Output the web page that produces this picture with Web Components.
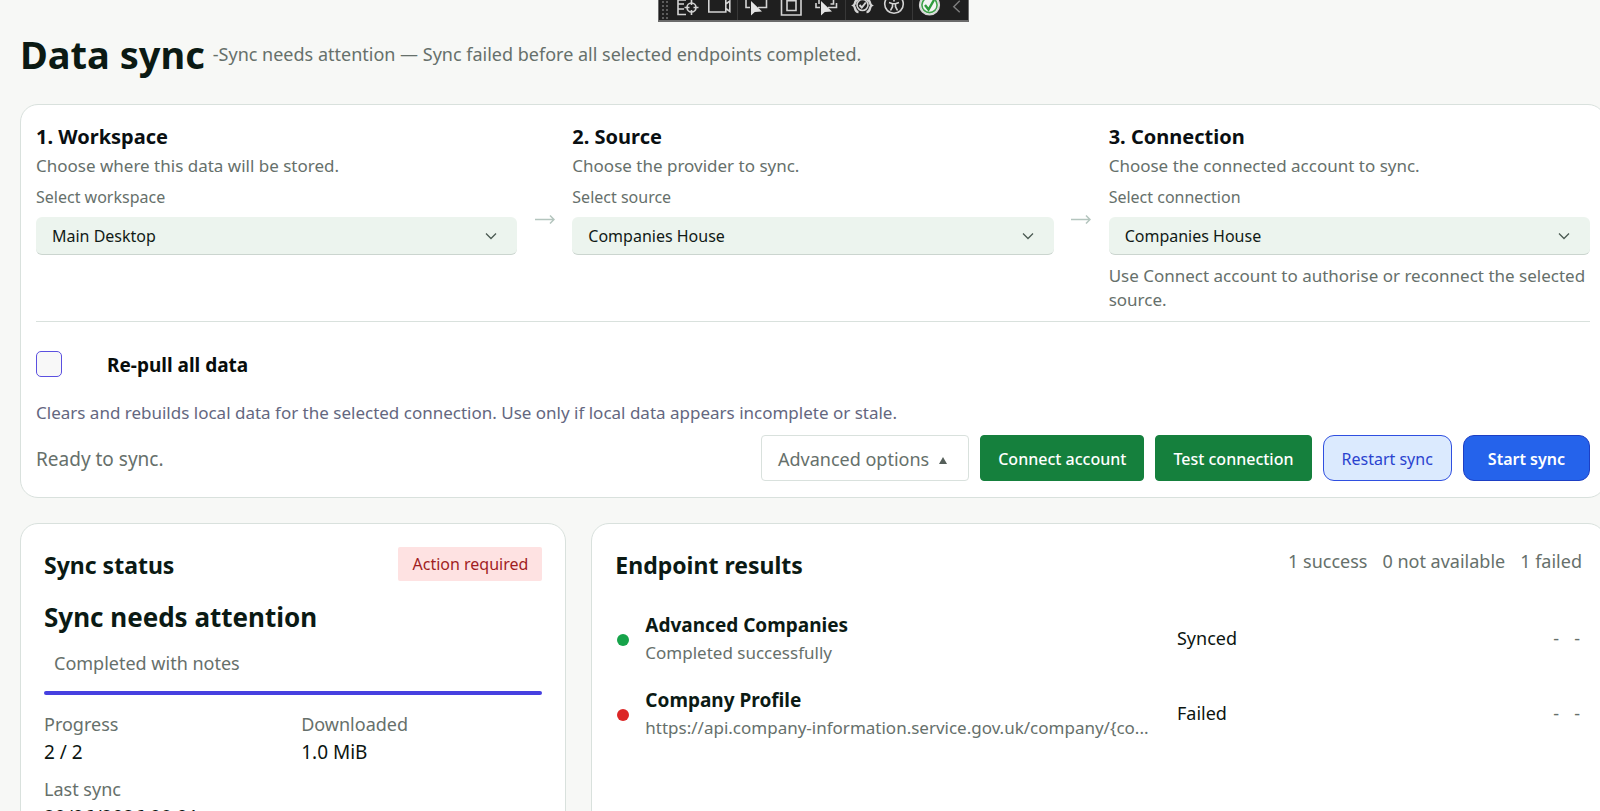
<!DOCTYPE html>
<html lang="en">
<head>
<meta charset="utf-8">
<meta name="viewport" content="width=device-width, initial-scale=1">
<title>Data sync</title>
<style>
  body {
    margin: 0;
    min-height: 100vh;
    overflow: hidden;
    background: #f7f8f6;
    color: #0b1511;
    font-family: "Noto Sans", "Open Sans", sans-serif;
    font-size: 18px;
    line-height: 24px;
    --ink: #0b1a14;
    --muted: #66706b;
    --line: #d9e1dd;
    --green: #15803d;
    --blue: #2563eb;
  }
</style>
</head>
<body>
<sync-page></sync-page>
<debug-toolbar></debug-toolbar>

<script>
// Floating tool strip that hangs from the top edge of the window
class DebugToolbar extends HTMLElement {
  constructor() {
    super();
    this.attachShadow({ mode: 'open' });
    this.shadowRoot.innerHTML = `
      <style>
        :host {
          position: absolute;
          top: 0;
          left: 658px;
          display: flex;
          height: 20px;
          background: #1f1f1f;
          border: 1px solid #6b6b6b;
          border-top: 0;
          border-bottom-width: 2px;
          overflow: hidden;
        }
        button {
          display: flex;
          justify-content: center;
          width: 32px;
          padding: 0;
          border: 0;
          background: none;
        }
        button.wide { width: 35px; }
        button.slim { width: 22px; }
        i { width: 1px; margin: 0 1px; background: #383838; }
        .grip {
          width: 9px;
          margin: 0 2px;
          background: radial-gradient(circle, #5c5c5c 1px, transparent 1px) 0 0 / 4px 4px;
        }
        svg { width: 24px; height: 20px; fill: none; stroke: #d4d4d4; stroke-width: 1.6; }
        .solid { fill: #e4e4e4; stroke: none; }
      </style>
      <span class="grip"></span>
      <button aria-label="Go to live visual tree"><svg viewBox="0 0 24 20"><path d="M2 0v14.500h8M2 4h6M2 9h6M2 0h8"/><circle cx="15.500" cy="7.500" r="4.500"/><path d="M15.500 0v5M15.500 10v5M8.500 7.500h5M17.500 7.500h5"/></svg></button>
      <button aria-label="Record"><svg viewBox="0 0 24 20"><path d="M.8 0v12h17V0M17.800 4l4-3v10.500l-4-3"/></svg></button>
      <i></i>
      <button class="wide" aria-label="Select element"><svg viewBox="0 0 24 20"><path d="M1 0v7.500h4M13 7.500h8.500V0"/><path class="solid" d="M6 1v14.500l3.800-3.600 7.200-.4z"/></svg></button>
      <button class="wide" aria-label="Display layout adorners"><svg viewBox="0 0 24 20"><path d="M1.500 0v15h19.500V0M7 0v10.500h9V0zM7 .7h9"/></svg></button>
      <button class="wide" aria-label="Track focused element"><svg viewBox="0 0 24 20"><path d="M1 3v4.500h4M4 0v4M13 7.500h8.500V3M18.500 0v4h-3"/><path class="solid" d="M6 1v14.500l3.800-3.600 7.200-.4z"/></svg></button>
      <i></i>
      <button aria-label="Binding failures"><svg viewBox="0 0 24 20"><path stroke-width="2.400" d="M7 0C3 0 5 4 2.500 5.500 5 7 3 12 7.500 12M16 0c4 0 2 4 4.500 5.500C18 7 20 12 15.500 12"/><circle cx="11.500" cy="5" r="5.500"/><path stroke-width="2" d="M8.500 5l2.300 2.500 4-5"/></svg></button>
      <button aria-label="Scan for accessibility"><svg viewBox="0 0 24 20"><circle cx="11" cy="4" r="9.300"/><path d="M6 2.500l3.500 1.200h3L16 2.500M9.500 3.700v3L7.500 10.500M12.500 3.700v3l2 3.800M11 0v1.500"/></svg></button>
      <i></i>
      <button aria-label="Hot reload"><svg viewBox="0 0 24 20"><circle cx="11.500" cy="5" r="9.800" fill="#f4f4f4"/><circle cx="11.500" cy="5" r="7.600" stroke="#3fa14a"/><path stroke="#2e9a3c" stroke-width="2.400" d="M7 5l3.500 4.500L16 0"/></svg></button>
      <button class="slim" aria-label="Collapse"><svg viewBox="0 0 24 20"><path stroke="#7c7c7c" d="M15 0L8.500 6.500l6.500 6"/></svg></button>
    `;
  }
}

class SurfaceCard extends HTMLElement {
  constructor() {
    super();
    this.attachShadow({ mode: 'open' });
    this.shadowRoot.innerHTML = `
      <style>
        :host {
          display: block;
          box-sizing: border-box;
          min-width: 0;
          padding: 23px;
          background: #fff;
          border: 1px solid var(--line);
          border-radius: 18px;
        }
        :host([compact]) { padding: 18px 15px 16px; }
      </style>
      <slot></slot>
    `;
  }
}

// One numbered step: heading, description and drop-down; the slot holds an optional hint
class SetupStep extends HTMLElement {
  constructor() {
    super();
    this.attachShadow({ mode: 'open' });
  }

  connectedCallback() {
    const heading = this.getAttribute('heading');
    const description = this.getAttribute('description');
    const label = this.getAttribute('label');
    const value = this.getAttribute('value');
    this.shadowRoot.innerHTML = `
      <style>
        :host { display: block; min-width: 0; font-size: 17px; color: var(--muted); }
        h2 { margin: 0 0 3px; font-size: 20px; line-height: 28px; font-weight: 700; color: #0a0f12; }
        p { margin: 0 0 8px; }
        label { display: block; margin-bottom: 9px; font-size: 16px; line-height: 22px; }
        .field { display: grid; align-items: center; margin-bottom: 9px; }
        select, svg { grid-area: 1 / 1; }
        select {
          appearance: none;
          width: 100%;
          height: 38px;
          padding: 1px 40px 0 16px;
          border: 0;
          border-bottom: 1px solid #cbd5cf;
          border-radius: 6px;
          background: #ecf4ee;
          color: #111a16;
          font: 16px/22px "Noto Sans", "Open Sans", sans-serif;
        }
        svg { justify-self: end; width: 12px; height: 8px; margin-right: 20px; fill: none; stroke: #4b5a53; stroke-width: 1.300; pointer-events: none; }
      </style>
      <h2>${heading}</h2>
      <p>${description}</p>
      <label for="choice">${label}</label>
      <div class="field">
        <select id="choice"><option>${value}</option></select>
        <svg viewBox="0 0 12 8"><path d="M1 1.500l5 5 5-5"/></svg>
      </div>
      <slot></slot>
    `;
  }
}

class StepArrow extends HTMLElement {
  constructor() {
    super();
    this.attachShadow({ mode: 'open' });
    this.shadowRoot.innerHTML = `
      <style>
        :host { display: flex; align-items: center; justify-content: center; }
        svg { width: 20px; height: 12px; fill: none; stroke: #b4c5be; stroke-width: 1.500; }
      </style>
      <svg viewBox="0 0 20 12"><path d="M0 7.500h19M15 3.500l4 4-4 4"/></svg>
    `;
  }
}

class ActionButton extends HTMLElement {
  constructor() {
    super();
    this.attachShadow({ mode: 'open' });
    this.shadowRoot.innerHTML = `
      <style>
        :host { display: block; }
        button {
          box-sizing: border-box;
          height: 46px;
          padding: 2px 17px 0;
          border: 1px solid var(--green);
          border-radius: 4px;
          background: var(--green);
          color: #fff;
          font: 500 16px/22px "Noto Sans", "Open Sans", sans-serif;
          white-space: nowrap;
        }
        :host([kind="outline"]) button {
          padding: 2px 21px 0 16px;
          background: #fff;
          border-color: var(--line);
          color: var(--muted);
          font-size: 18px;
          font-weight: 400;
        }
        :host([kind="soft"]) button {
          padding: 2px 18px 0;
          background: #dbeafe;
          border-color: #2f4fe0;
          border-radius: 11px;
          color: #2a43cf;
          font-weight: 400;
        }
        :host([kind="primary"]) button {
          padding: 2px 24px 0;
          background: var(--blue);
          border-color: #1d3fc4;
          border-radius: 11px;
          font-weight: 600;
        }
      </style>
      <button type="button"><slot></slot></button>
    `;
  }
}

class SetupPanel extends HTMLElement {
  constructor() {
    super();
    this.attachShadow({ mode: 'open' });
    this.shadowRoot.innerHTML = `
      <style>
        :host { display: block; }
        .steps { display: grid; grid-template-columns: 1fr 55px 1fr 55px 1fr; padding-bottom: 9px; border-bottom: 1px solid var(--line); }
        .repull { display: flex; align-items: center; gap: 45px; height: 26px; margin: 29px 0 24px; }
        .repull input {
          appearance: none;
          width: 26px;
          height: 26px;
          margin: 0;
          border: 1px solid #5b50e0;
          border-radius: 5px;
          background: #f8f8f8;
        }
        .repull input:checked { background: #4f46e5; }
        .repull label { padding-top: 2px; font-size: 19px; font-weight: 700; color: #080d0b; }
        .note { margin: 0 0 10px; font-size: 17px; color: #64677f; }
        .footer { display: flex; align-items: center; gap: 11px; }
        .state { flex: 1; padding-top: 2px; font-size: 19px; color: var(--muted); }
        .caret {
          display: inline-block;
          margin-left: 10px;
          vertical-align: 2px;
          border: 4px solid transparent;
          border-top: 0;
          border-bottom: 7px solid #555f5a;
        }
      </style>
      <surface-card compact>
        <div class="steps">
          <setup-step heading="1. Workspace" description="Choose where this data will be stored." label="Select workspace" value="Main Desktop"></setup-step>
          <step-arrow></step-arrow>
          <setup-step heading="2. Source" description="Choose the provider to sync." label="Select source" value="Companies House"></setup-step>
          <step-arrow></step-arrow>
          <setup-step heading="3. Connection" description="Choose the connected account to sync." label="Select connection" value="Companies House">Use Connect account to authorise or reconnect the selected source.</setup-step>
        </div>
        <div class="repull">
          <input type="checkbox" id="repull">
          <label for="repull">Re-pull all data</label>
        </div>
        <p class="note">Clears and rebuilds local data for the selected connection. Use only if local data appears incomplete or stale.</p>
        <div class="footer">
          <span class="state">Ready to sync.</span>
          <action-button kind="outline">Advanced options<span class="caret"></span></action-button>
          <action-button>Connect account</action-button>
          <action-button>Test connection</action-button>
          <action-button kind="soft">Restart sync</action-button>
          <action-button kind="primary">Start sync</action-button>
        </div>
      </surface-card>
    `;
  }
}

class SyncStatus extends HTMLElement {
  constructor() {
    super();
    this.attachShadow({ mode: 'open' });
    this.shadowRoot.innerHTML = `
      <style>
        :host { display: grid; min-width: 0; }
        header { display: flex; align-items: center; justify-content: space-between; }
        h2, h3 { margin: 0; color: var(--ink); }
        h2 { padding-top: 2px; font-size: 23px; line-height: 32px; font-weight: 700; }
        h3 { margin: 18px 0 16px; font-size: 26px; line-height: 36px; font-weight: 700; }
        .badge { padding: 6px 14px; border-radius: 2px; background: #fee2e2; color: #a11d23; font-size: 16px; line-height: 22px; }
        .phase { margin: 0 0 16px; padding-left: 10px; color: var(--muted); }
        .bar { height: 4px; border-radius: 2px; background: #4640e0; }
        dl { display: grid; grid-template-columns: 1fr 1fr; gap: 11px 16px; margin: 17px 0 0; }
        dt { margin-bottom: 2px; color: var(--muted); }
        dd { margin: 0; font-size: 19px; line-height: 28px; }
      </style>
      <surface-card>
        <header>
          <h2>Sync status</h2>
          <span class="badge">Action required</span>
        </header>
        <h3>Sync needs attention</h3>
        <p class="phase">Completed with notes</p>
        <div class="bar" role="progressbar" aria-valuenow="100" aria-label="Sync progress"></div>
        <dl>
          <div><dt>Progress</dt><dd>2 / 2</dd></div>
          <div><dt>Downloaded</dt><dd>1.0 MiB</dd></div>
          <div><dt>Last sync</dt><dd>20/06/2026 08:01</dd></div>
        </dl>
      </surface-card>
    `;
  }
}

class EndpointResults extends HTMLElement {
  constructor() {
    super();
    this.attachShadow({ mode: 'open' });
    this.rows = [
      { name: 'Advanced Companies', detail: 'Completed successfully', status: 'Synced', color: '#16a34a' },
      { name: 'Company Profile', detail: 'https://api.company-information.service.gov.uk/company/{co...', status: 'Failed', color: '#dc2626' }
    ];
    this.render();
  }

  render() {
    const rows = this.rows.map(row => `
      <tr>
        <td><span class="dot" style="background: ${row.color}"></span></td>
        <td><div class="name">${row.name}</div><div class="detail">${row.detail}</div></td>
        <td>${row.status}</td>
        <td class="num">-</td>
        <td class="num">-</td>
      </tr>
    `).join('');

    this.shadowRoot.innerHTML = `
      <style>
        :host { display: grid; min-width: 0; }
        header { display: flex; align-items: flex-start; justify-content: space-between; }
        h2 { margin: 0; padding-top: 2px; font-size: 23px; line-height: 32px; font-weight: 700; color: var(--ink); }
        .counts { display: flex; gap: 15px; padding-top: 2px; color: var(--muted); }
        table { width: 100%; margin-top: 19px; table-layout: fixed; border-collapse: collapse; }
        td { height: 75px; padding: 0; box-sizing: border-box; vertical-align: middle; }
        .col-dot { width: 30px; }
        .col-name { width: 55%; }
        .col-last { width: 21px; }
        .dot { display: block; width: 12px; height: 12px; margin: 5px 0 0 2px; border-radius: 50%; }
        .name { margin-bottom: 2px; font-size: 19px; line-height: 28px; font-weight: 700; color: var(--ink); }
        .detail { margin-right: 16px; overflow: hidden; text-overflow: ellipsis; white-space: nowrap; font-size: 17px; color: var(--muted); }
        .num { padding-right: 2px; text-align: right; color: var(--muted); }
      </style>
      <surface-card>
        <header>
          <h2>Endpoint results</h2>
          <div class="counts"><span>1 success</span><span>0 not available</span><span>1 failed</span></div>
        </header>
        <table>
          <colgroup><col class="col-dot"><col class="col-name"><col><col><col class="col-last"></colgroup>
          <tbody>${rows}</tbody>
        </table>
      </surface-card>
    `;
  }
}

class SyncPage extends HTMLElement {
  constructor() {
    super();
    this.attachShadow({ mode: 'open' });
    this.shadowRoot.innerHTML = `
      <style>
        /* the content runs slightly past the right edge of the window */
        :host { display: block; margin-right: -6px; padding: 28px 0 24px 20px; }
        header { display: flex; align-items: center; gap: 8px; margin-bottom: 24px; }
        h1 { margin: 0; font-size: 38px; line-height: 52px; font-weight: 700; color: var(--ink); }
        header p { margin: 0; color: var(--muted); }
        .columns { display: grid; grid-template-columns: 35fr 65fr; gap: 25px; margin-top: 25px; }
      </style>
      <header>
        <h1>Data sync</h1>
        <p>-Sync needs attention — Sync failed before all selected endpoints completed.</p>
      </header>
      <setup-panel></setup-panel>
      <div class="columns">
        <sync-status></sync-status>
        <endpoint-results></endpoint-results>
      </div>
    `;
  }
}

customElements.define('debug-toolbar', DebugToolbar);
customElements.define('surface-card', SurfaceCard);
customElements.define('setup-step', SetupStep);
customElements.define('step-arrow', StepArrow);
customElements.define('action-button', ActionButton);
customElements.define('setup-panel', SetupPanel);
customElements.define('sync-status', SyncStatus);
customElements.define('endpoint-results', EndpointResults);
customElements.define('sync-page', SyncPage);
</script>
</body>
</html>
